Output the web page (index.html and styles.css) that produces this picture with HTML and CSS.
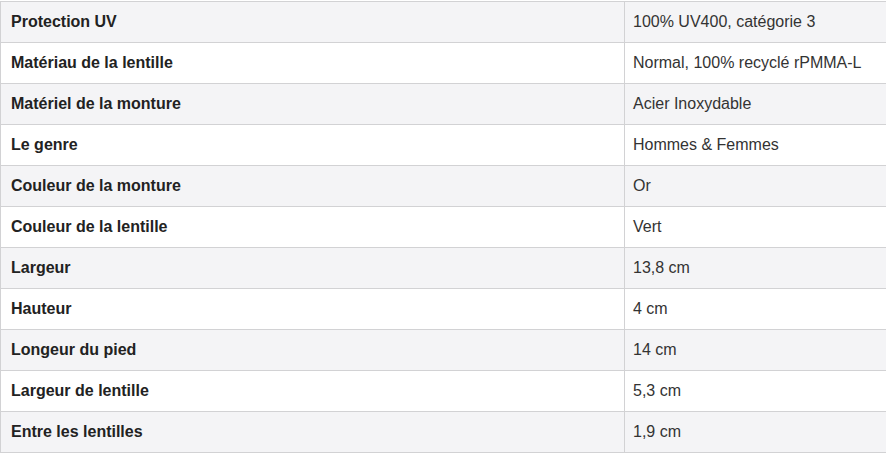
FILE: index.html
```html
<!DOCTYPE html>
<html lang="fr">
<head>
<meta charset="utf-8">
<title>Caractéristiques</title>
<link rel="stylesheet" href="styles.css">
</head>
<body>
<table class="specs">
  <colgroup><col class="col-label"><col class="col-value"></colgroup>
  <tbody>
    <tr><th>Protection UV</th><td>100% UV400, catégorie 3</td></tr>
    <tr><th>Matériau de la lentille</th><td>Normal, 100% recyclé rPMMA-L</td></tr>
    <tr><th>Matériel de la monture</th><td>Acier Inoxydable</td></tr>
    <tr><th>Le genre</th><td>Hommes &amp; Femmes</td></tr>
    <tr><th>Couleur de la monture</th><td>Or</td></tr>
    <tr><th>Couleur de la lentille</th><td>Vert</td></tr>
    <tr><th>Largeur</th><td>13,8 cm</td></tr>
    <tr><th>Hauteur</th><td>4 cm</td></tr>
    <tr><th>Longeur du pied</th><td>14 cm</td></tr>
    <tr><th>Largeur de lentille</th><td>5,3 cm</td></tr>
    <tr><th>Entre les lentilles</th><td>1,9 cm</td></tr>
  </tbody>
</table>
</body>
</html>
```
FILE: styles.css
```css
html, body {
  margin: 0;
  padding: 0;
  background: #ffffff;
}
body {
  padding-top: 1px;
  font-family: "Liberation Sans", Arial, sans-serif;
  overflow: hidden;
}
.specs {
  border-collapse: collapse;
  table-layout: fixed;
  width: 887px;
  font-size: 16px;
  color: #333333;
}
.col-label { width: 624px; }
.specs th,
.specs td {
  height: 41px;
  padding: 0 10px;
  border: 1px solid #d2d2d4;
  text-align: left;
  vertical-align: middle;
  box-sizing: border-box;
}
.specs td {
  padding-left: 8px;
}
.specs th {
  font-weight: bold;
  color: #222222;
}
.specs tr:nth-child(odd) {
  background: #f4f4f6;
}
.specs tr:nth-child(even) {
  background: #ffffff;
}
```
